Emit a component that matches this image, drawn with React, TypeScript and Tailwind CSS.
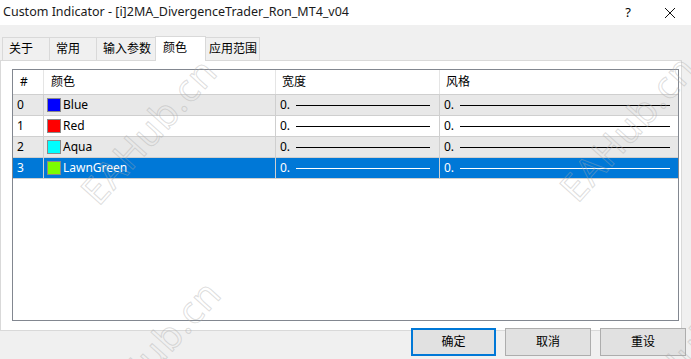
import React from "react";

const rows = [
  { id: "0", name: "Blue", color: "bg-[#0000ff]", bg: "bg-[#e8e8e8]", sel: false },
  { id: "1", name: "Red", color: "bg-[#ff0000]", bg: "bg-white", sel: false },
  { id: "2", name: "Aqua", color: "bg-[#00ffff]", bg: "bg-[#e8e8e8]", sel: false },
  { id: "3", name: "LawnGreen", color: "bg-[#7cfc00]", bg: "bg-[#0078d7]", sel: true },
];

const tabs = ["关于", "常用", "输入参数", "颜色", "应用范围"];

function Watermark({ className }: { className: string }) {
  return (
    <div
      aria-hidden="true"
      className={
        "absolute pointer-events-none select-none text-[38px] tracking-[1px] text-transparent [-webkit-text-stroke:1px_rgba(170,170,170,0.4)] rotate-[-48deg] origin-center whitespace-nowrap " +
        className
      }
    >
      EAHub.cn
    </div>
  );
}

export default function App() {
  return (
    <div className="w-[691px] h-[359px] bg-[#f0f0f0] relative overflow-hidden text-[12px] text-black font-['Noto_Sans','Noto_Sans_CJK_SC',sans-serif]">
      {/* title bar */}
      <div className="h-[25px] bg-white flex items-center pl-[3px]">
        <span className="text-[12.5px] text-[#1a1a1a]">Custom Indicator - [i]2MA_DivergenceTrader_Ron_MT4_v04</span>
        <span className="ml-auto text-[13px] mr-[33px]">?</span>
        <svg width="12" height="12" viewBox="0 0 12 12" className="mr-[15px]">
          <path d="M1 1L11 11M11 1L1 11" stroke="#111" strokeWidth="1" />
        </svg>
      </div>

      {/* tabs */}
      <div className="flex items-end h-[35px] pl-[2px]">
        {tabs.map((t, i) =>
          i === 3 ? (
            <div
              key={t}
              className="h-[25px] w-[51px] bg-white border border-b-0 border-[#d9d9d9] -mx-[1px] relative z-10 flex items-start pt-[2px] pl-[7px] -mb-[1px] whitespace-nowrap"
            >
              {t}
            </div>
          ) : (
            <div
              key={t}
              className={
                "h-[23px] bg-[#f0f0f0] border border-b-0 border-[#d9d9d9] flex items-center -ml-[1px] first:ml-0 whitespace-nowrap " +
                (i === 2 ? "w-[60px] pl-[6px]" : i === 4 ? "w-[56px] pl-[4px]" : "w-[48px] pl-[6px]")
              }
            >
              {t}
            </div>
          )
        )}
      </div>

      {/* panel */}
      <div className="w-[682px] h-[271px] bg-white border border-[#d9d9d9] pt-[8px] pl-[11px] pr-[2px]">
        <div className="w-[667px] h-[252px] border border-[#828790] bg-white">
          <div className="flex h-[25px] border-b border-[#cfcfcf] items-center">
            <div className="w-[31px] h-full border-r border-[#e5e5e5] flex items-center pl-[7px]">#</div>
            <div className="w-[232px] h-full border-r border-[#e5e5e5] flex items-center pl-[7px]">颜色</div>
            <div className="w-[164px] h-full border-r border-[#e5e5e5] flex items-center pl-[6px]">宽度</div>
            <div className="flex-1 h-full flex items-center pl-[6px]">风格</div>
          </div>
          {rows.map((r) => (
            <div
              key={r.id}
              className={
                "flex h-[21px] border-b border-[#cfcfcf] " + r.bg + (r.sel ? " text-white" : " text-black")
              }
            >
              <div className="w-[31px] h-full border-r border-[#cfcfcf] flex items-center pl-[4px]">{r.id}</div>
              <div className="w-[232px] h-full border-r border-[#cfcfcf] flex items-center pl-[3px] gap-[2px]">
                <span className={"w-[14px] h-[14px] border border-[#8a8a8a] " + r.color} />
                <span>{r.name}</span>
              </div>
              <div className="w-[164px] h-full border-r border-[#cfcfcf] flex items-center pl-[4px]">
                <span>0.</span>
                <span className={"ml-[6px] w-[134px] h-px " + (r.sel ? "bg-white" : "bg-black")} />
              </div>
              <div className="flex-1 h-full flex items-center pl-[4px]">
                <span>0.</span>
                <span className={"ml-[6px] w-[210px] h-px " + (r.sel ? "bg-white" : "bg-black")} />
              </div>
            </div>
          ))}
        </div>
      </div>

      {/* buttons */}
      <div className="flex justify-end gap-[9px] pr-[5px] mt-[-3px]">
        <button className="w-[85px] h-[28px] bg-[#e1e1e1] border-2 border-[#0078d7] flex items-center justify-center">
          确定
        </button>
        <button className="w-[86px] h-[28px] bg-[#e1e1e1] border border-[#adadad] flex items-center justify-center">
          取消
        </button>
        <button className="w-[86px] h-[28px] bg-[#e1e1e1] border border-[#adadad] flex items-center justify-center">
          重设
        </button>
      </div>

      <Watermark className="left-[58px] top-[102px]" />
      <Watermark className="left-[537px] top-[99px]" />
      <Watermark className="left-[62px] top-[324px]" />
      <Watermark className="left-[600px] top-[320px]" />
    </div>
  );
}
